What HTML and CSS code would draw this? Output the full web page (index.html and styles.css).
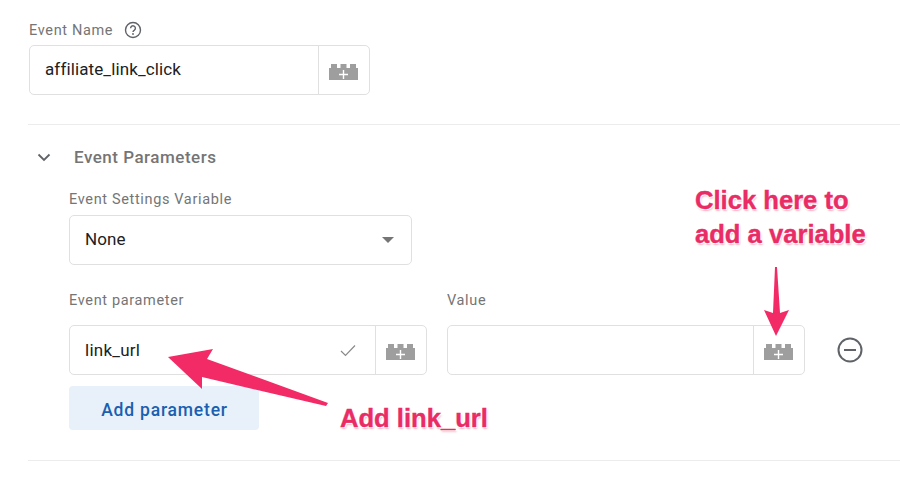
FILE: index.html

```html
<!DOCTYPE html>
<html lang="en">
<head>
  <meta charset="UTF-8">
  <title>Event Parameters</title>
  <link rel="stylesheet" href="styles.css">
</head>
<body>

<svg width="0" height="0" class="defs">
  <symbol id="brick" viewBox="0 0 29 16">
    <path fill="#9e9e9e" d="M0 16V4h2V0h6v4h3.500V0h6v4H21V0h6v4h2v12z"/>
    <path fill="#fff" d="M13.800 6h1.400v3.800H19v1.400h-3.800V15h-1.400v-3.800H10V9.800h3.800z"/>
  </symbol>
</svg>

<main class="page">
  <div class="label label-help">
    <span>Event Name</span>
    <svg class="help" width="18" height="18" viewBox="0 0 18 18">
      <circle cx="9" cy="9" r="7.500" fill="none" stroke="#5f6368" stroke-width="1.400"/>
      <path d="M6.600 7.200a2.400 2.400 0 1 1 3.800 1.900c-.9.6-1.400 1-1.400 2" fill="none" stroke="#5f6368" stroke-width="1.400"/>
      <circle cx="9" cy="13" r=".9" fill="#5f6368"/>
    </svg>
  </div>
  <div class="field field-name">
    <div class="field-text">affiliate_link_click</div>
    <div class="field-btn"><svg class="brick"><use href="#brick"/></svg></div>
  </div>

  <hr class="rule rule-first">

  <div class="section-head">
    <svg class="chevron" width="14" height="9" viewBox="0 0 14 9">
      <path d="M1.500 1.500L7 7l5.500-5.500" fill="none" stroke="#5f6368" stroke-width="1.800"/>
    </svg>
    <span>Event Parameters</span>
  </div>

  <div class="params">
    <div class="label label-settings">Event Settings Variable</div>
    <div class="select">
      <span>None</span>
      <span class="caret"></span>
    </div>

    <div class="param-row">
      <div class="param-col">
        <div class="label">Event parameter</div>
        <div class="field field-param">
          <div class="field-text">link_url</div>
          <svg class="check" width="16" height="13" viewBox="0 0 16 13">
            <path d="M1 7l4.500 4.500L15 1.500" fill="none" stroke="#8a8a8a" stroke-width="1.200"/>
          </svg>
          <div class="field-btn"><svg class="brick"><use href="#brick"/></svg></div>
        </div>
      </div>
      <div class="param-col">
        <div class="label">Value</div>
        <div class="field field-param">
          <div class="field-text"></div>
          <div class="field-btn"><svg class="brick"><use href="#brick"/></svg></div>
        </div>
      </div>
      <svg class="minus" width="28" height="28" viewBox="0 0 28 28">
        <circle cx="14" cy="14" r="11.500" fill="none" stroke="#5f6368" stroke-width="2"/>
        <path d="M8 14h12" stroke="#5f6368" stroke-width="2"/>
      </svg>
    </div>

    <button class="add-btn">Add parameter</button>
  </div>

  <hr class="rule rule-last">
</main>

<!-- annotations drawn on top of the screenshot -->
<svg class="arrows" width="900" height="480" viewBox="0 0 900 480">
  <path d="M168 357L213 349L207 359L328 403L326 406L202 377L202 389z"/>
  <path d="M775 267h2L780 313L789 310L776 336L764 310L773 313z"/>
</svg>
<div class="note note-click">Click here to<br>add a variable</div>
<div class="note note-add">Add link_url</div>

</body>
</html>
```

FILE: styles.css

```css
body {
  margin: 0;
  background-color: #fff;
  font-family: Roboto, "Liberation Sans", sans-serif;
  color: #202124;
  overflow: hidden;
}
.defs {
  position: absolute;
}
.page {
  padding: 20px 0 0 29px;
}
.label {
  height: 20px;
  line-height: 21px;
  font-size: 14.5px;
  letter-spacing: 0.65px;
  color: #757575;
}
.label-help {
  display: flex;
  align-items: center;
  gap: 11px;
  margin-bottom: 5px;
}
.field {
  display: flex;
  align-items: center;
  box-sizing: border-box;
  height: 50px;
  background-color: #fff;
  border: 1px solid #e0e0e0;
  border-radius: 5px;
}
.field-name {
  width: 341px;
}
.field-param {
  width: 358px;
  margin-top: 15px;
}
.field-text {
  flex: 1;
  padding: 0 0 2px 15px;
  font-size: 17px;
  letter-spacing: 0.12px;
}
.field-param .field-text {
  padding-bottom: 0;
  letter-spacing: 0.25px;
}
.field-btn {
  display: flex;
  align-items: center;
  justify-content: center;
  box-sizing: border-box;
  width: 51px;
  height: 100%;
  border-left: 1px solid #e0e0e0;
}
.brick {
  width: 29px;
  height: 16px;
  margin: 4px 2px 0 0;
}
.check {
  margin-right: 19px;
}
.rule {
  height: 1px;
  margin: 0 0 0 -1px;
  border: 0;
  background-color: #ececec;
}
.rule-first {
  margin-top: 29px;
}
.rule-last {
  margin-top: 30px;
}
.section-head {
  display: flex;
  align-items: center;
  height: 24px;
  margin-top: 20px;
  font-size: 17px;
  font-weight: 500;
  letter-spacing: 0.5px;
  color: #757575;
}
.chevron {
  margin: 0 23px 0 8px;
}
.params {
  padding-left: 40px;
}
.label-settings {
  margin-top: 20px;
}
.select {
  display: flex;
  align-items: center;
  justify-content: space-between;
  box-sizing: border-box;
  width: 343px;
  height: 50px;
  margin-top: 6px;
  padding: 0 17px 2px 15px;
  border: 1px solid #e0e0e0;
  border-radius: 5px;
  font-size: 17px;
  letter-spacing: 0.12px;
}
.caret {
  width: 0;
  height: 0;
  margin-top: 2px;
  border-left: 6px solid transparent;
  border-right: 6px solid transparent;
  border-top: 6px solid #757575;
}
.param-row {
  display: flex;
  align-items: flex-end;
  gap: 20px;
  margin-top: 25px;
}
.minus {
  margin: 0 0 11px 11px;
}
.add-btn {
  display: block;
  width: 190px;
  height: 44px;
  margin-top: 11px;
  padding: 3px 0 0 1px;
  border: 0;
  border-radius: 4px;
  background-color: #e8f0fa;
  color: #1a5fb0;
  font-family: inherit;
  font-size: 17.5px;
  font-weight: 500;
  letter-spacing: 0.8px;
}
.arrows {
  position: absolute;
  top: 0;
  left: 0;
  fill: #f22b66;
}
.note {
  position: absolute;
  font-family: "Liberation Sans", Arial, sans-serif;
  font-weight: 700;
  font-size: 25.6px;
  line-height: 34px;
  white-space: nowrap;
  color: #ea2c66;
  -webkit-text-stroke: 0.4px #ea2c66;
  text-shadow: 1px 1px 0 #fff, -1px -1px 0 #fff, 1px -1px 0 #fff, -1px 1px 0 #fff, 1px 2px 2px rgba(180, 30, 80, 0.35);
}
.note-click {
  left: 695px;
  top: 183px;
}
.note-add {
  left: 340px;
  top: 401px;
}
```
